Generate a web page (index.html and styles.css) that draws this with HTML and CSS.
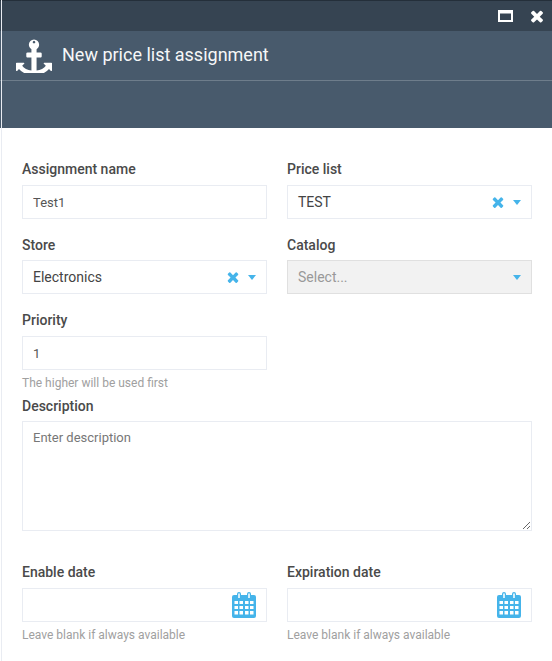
FILE: index.html
```html
<!DOCTYPE html>
<html>
  <head>
    <title>New price list assignment</title>
    <link rel="stylesheet" href="styles.css">
  </head>
  <body>
    <div class="blade">
      <div class="topbar">
        <svg class="win-icon" width="15" height="12" viewBox="0 0 15 12"><path fill="#fff" fill-rule="evenodd" d="M0 0h15v12H0zM2 3.500v6.500h11V3.500z"/></svg>
        <svg class="win-icon" width="18" height="18" viewBox="0 0 1792 1792"><use href="#times" fill="#fff"/></svg>
      </div>
      <div class="head">
        <div class="head-title">
          <svg class="anchor" width="36" height="36" viewBox="0 0 1792 1792"><path fill="#fff" d="M960 256q0-26-19-45t-45-19-45 19-19 45 19 45 45 19 45-19 19-45zm832 1056v352q0 22-20 30-8 2-12 2-12 0-23-9l-93-93q-119 143-318.500 226.500t-429.500 83.500-429.500-83.500-318.500-226.500l-93 93q-9 9-23 9-4 0-12-2-20-8-20-30v-352q0-14 9-23t23-9h352q22 0 30 20 8 19-7 35l-100 100q67 91 189.500 153.500t271.500 82.500v-647h-192q-26 0-45-19t-19-45v-128q0-26 19-45t45-19h192v-163q-58-34-93-92.500t-35-128.500q0-106 75-181t181-75 181 75 75 181q0 70-35 128.500t-93 92.500v163h192q26 0 45 19t19 45v128q0 26-19 45t-45 19h-192v647q149-20 271.500-82.500t189.500-153.500l-100-100q-15-16-7-35 8-20 30-20h352q14 0 23 9t9 23z"/></svg>
          <span>New price list assignment</span>
        </div>
      </div>

      <form class="form">
        <div class="row">
          <div class="field">
            <label>Assignment name</label>
            <input class="box" type="text" value="Test1">
          </div>
          <div class="field">
            <label>Price list</label>
            <div class="box select">
              <span class="select-text">TEST</span>
              <svg class="clear" width="16" height="16" viewBox="0 0 1792 1792"><use href="#times" fill="#45b4ea"/></svg>
              <i class="caret"></i>
            </div>
          </div>
        </div>
        <div class="row row-tight">
          <div class="field">
            <label>Store</label>
            <div class="box select">
              <span class="select-text">Electronics</span>
              <svg class="clear" width="16" height="16" viewBox="0 0 1792 1792"><use href="#times" fill="#45b4ea"/></svg>
              <i class="caret"></i>
            </div>
          </div>
          <div class="field">
            <label>Catalog</label>
            <div class="box select disabled">
              <span class="select-text">Select...</span>
              <i class="caret"></i>
            </div>
          </div>
        </div>
        <div class="row">
          <div class="field">
            <label>Priority</label>
            <input class="box" type="text" value="1">
            <p class="hint">The higher will be used first</p>
          </div>
        </div>
        <div class="field descr">
          <label>Description</label>
          <textarea class="box area" placeholder="Enter description"></textarea>
        </div>
        <div class="row">
          <div class="field">
            <label>Enable date</label>
            <div class="box date">
              <svg width="24" height="26" viewBox="0 0 24 26"><use href="#cal"/></svg>
            </div>
            <p class="hint">Leave blank if always available</p>
          </div>
          <div class="field">
            <label>Expiration date</label>
            <div class="box date">
              <svg width="24" height="26" viewBox="0 0 24 26"><use href="#cal"/></svg>
            </div>
            <p class="hint">Leave blank if always available</p>
          </div>
        </div>
      </form>
    </div>

    <svg class="defs" width="0" height="0">
      <symbol id="times" viewBox="0 0 1792 1792">
        <path d="M1490 1322q0 40-28 68l-136 136q-28 28-68 28t-68-28l-294-294-294 294q-28 28-68 28t-68-28l-136-136q-28-28-28-68t28-68l294-294-294-294q-28-28-28-68t28-68l136-136q28-28 68-28t68 28l294 294 294-294q28-28 68-28t68 28l136 136q28 28 28 68t-28 68l-294 294 294 294q28 28 28 68z"/>
      </symbol>
      <symbol id="cal" viewBox="0 0 24 26">
        <path fill="#45b4ea" d="M2 3h3V2a2 2 0 0 1 4 0v1h6V2a2 2 0 0 1 4 0v1h3a2 2 0 0 1 2 2v19a2 2 0 0 1-2 2H2a2 2 0 0 1-2-2V5a2 2 0 0 1 2-2z"/>
        <path fill="#d5eefa" d="M6 1.500h2V6H6zM16 1.500h2V6h-2z"/>
        <path fill="#fff" d="M2.500 9h3.500v3H2.500zM7.500 9H11v3H7.500zM13 9h3.500v3H13zM18 9h3.500v3H18zM2.500 14H6v3H2.500zM7.500 14H11v3H7.500zM13 14h3.500v3H13zM18 14h3.500v3H18zM2.500 19H6v3.500H2.500zM7.500 19H11v3.500H7.500zM13 19h3.500v3.500H13zM18 19h3.500v3.500H18z"/>
      </symbol>
    </svg>
  </body>
</html>
```

FILE: styles.css
```css
html, body { margin: 0; height: 100%; }
body { font-family: Roboto, "Liberation Sans", sans-serif; font-size: 13px; color: #333; background: #fff; overflow: hidden; }

.blade { height: 100%; position: relative; }
/* thin line down the left side, over the header too */
.blade::before { content: ""; position: absolute; top: 0; bottom: 0; left: 1px; width: 1px; background: #e9ecf2; }

.topbar { height: 30px; border-top: 1px solid #242f3a; background: #364452; display: flex; justify-content: flex-end; align-items: center; gap: 15px; padding-right: 6px; }

.head { height: 97px; background: #485a6c; }
.head-title { height: 50px; box-sizing: border-box; border-bottom: 1px solid #6e7d8b; display: flex; align-items: center; gap: 10px; padding: 0 0 2px 16px; color: #f6f7f8; font-size: 18px; font-weight: 400; }

.form { padding: 32px 20px 0 22px; }
.row { display: grid; grid-template-columns: 245px 245px; gap: 20px; }

.field label { display: block; font-size: 14px; line-height: 18px; margin-bottom: 7px; font-weight: 500; color: #4a4a4a; }
.row + .row { margin-top: 17px; }
.row-tight .field label { margin-bottom: 6px; }

.box { display: block; width: 100%; height: 34px; box-sizing: border-box; border: 1px solid #e9ecf2; background: #fff; padding: 0 10px; font: inherit; color: #555; outline: none; }

.select { display: flex; align-items: center; font-size: 14px; color: #444; }
.select-text { flex-grow: 1; }
.clear { margin-right: 7px; }
.caret { width: 0; height: 0; border-left: 4px solid transparent; border-right: 4px solid transparent; border-top: 5px solid #45b4ea; }
.disabled { background: #f2f2f2; border-color: #e0e0e0; color: #999; }

.hint { margin: 6px 0 0 0; font-size: 12px; line-height: 15px; color: #a0a0a0; }

.descr { margin-top: 6px; }
.descr label { margin-bottom: 6px; }
.area { height: 110px; padding: 8px 10px; resize: vertical; }
.area::placeholder { color: #777; }

.descr + .row { margin-top: 32px; }
.date { display: flex; justify-content: flex-end; align-items: center; padding-right: 10px; }

.defs { position: absolute; }
```
